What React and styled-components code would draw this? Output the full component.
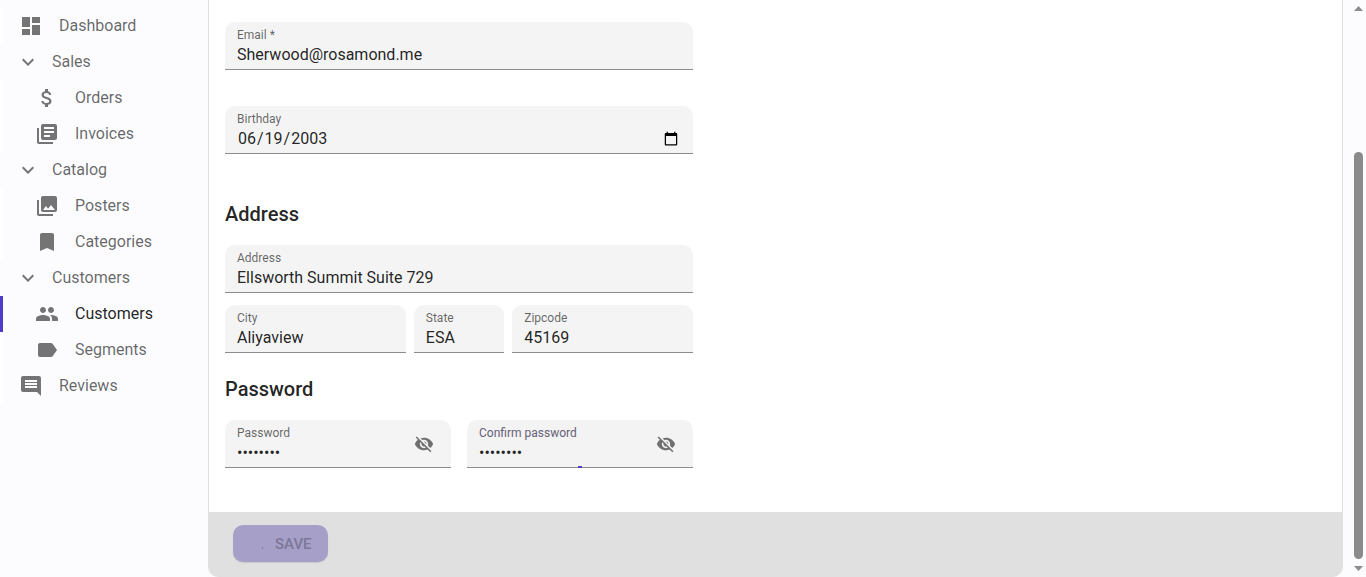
import React from "react";
import styled, { createGlobalStyle, css } from "styled-components";
import {
  MdDashboard,
  MdExpandMore,
  MdAttachMoney,
  MdLibraryBooks,
  MdCollections,
  MdBookmark,
  MdPeople,
  MdLabel,
  MdComment,
  MdVisibilityOff,
} from "react-icons/md";

const GlobalStyle = createGlobalStyle`
  *, *::before, *::after { box-sizing: border-box; }
  body {
    margin: 0;
    background: #fcfcfe;
    color: rgba(0, 0, 0, 0.87);
    font-family: Roboto, "Liberation Sans", sans-serif;
    font-size: 16px;
    line-height: 24px;
  }
`;

const Page = styled.div`
  display: flex;
  align-items: flex-start;
`;

const Sidebar = styled.nav`
  flex: 0 0 208px;
  padding-top: 8px;
`;

const MenuList = styled.ul`
  margin: 0;
  padding: 0;
  list-style: none;
`;

const row = css`
  display: flex;
  align-items: center;
  width: 100%;
  height: 36px;
  color: rgba(0, 0, 0, 0.6);
  font: inherit;
  text-align: left;
  text-decoration: none;

  svg {
    flex: none;
    width: 24px;
    height: 24px;
    color: rgba(0, 0, 0, 0.54);
  }
`;

const MenuLink = styled.a`
  ${row}
  gap: 16px;
  padding-left: ${(p) => (p.$nested ? 32 : 16)}px;
  border-left: 3px solid ${(p) => (p.$active ? "#4f3cc9" : "#fff")};
  ${(p) => p.$active && "color: rgba(0, 0, 0, 0.87);"}
`;

const GroupButton = styled.button`
  ${row}
  gap: 12px;
  padding: 0 16px;
  border: 0;
  background: none;
`;

const Card = styled.main`
  flex: 1;
  min-width: 0;
  margin-right: 8px;
  border: 1px solid #e0e0e3;
  border-top: 0;
  border-bottom: 0;
  border-radius: 0 0 10px 10px;
  background: #fff;
  overflow: hidden;
`;

const FormBody = styled.div`
  width: 100%;
  max-width: 500px;
  padding: 22px 16px 44px;
`;

const SectionTitle = styled.h2`
  margin: 0 0 15px;
  font-size: 20px;
  font-weight: 500;
  line-height: 32px;
`;

const FieldRow = styled.div`
  display: grid;
  grid-template-columns: ${(p) => p.$columns || "1fr"};
  gap: ${(p) => p.$gap || 8}px;
  margin-bottom: ${(p) => p.$space || 0}px;
`;

const FieldBox = styled.div`
  display: flex;
  align-items: center;
  min-width: 0;
  height: 48px;
  padding: 0 12px;
  border-bottom: 1px solid #8c8c8c;
  border-radius: 10px 10px 0 0;
  background: ${(p) => (p.$focused ? "#f3f3f3" : "#f4f4f4")};
  position: relative;

  ${(p) =>
    p.$focused &&
    css`
      &::after {
        content: "";
        position: absolute;
        bottom: -1px;
        left: calc(50% - 2px);
        width: 4px;
        height: 2px;
        background: #4f3cc9;
      }
    `}
`;

const FieldText = styled.div`
  display: flex;
  flex: 1;
  flex-direction: column;
  min-width: 0;
  padding-top: 2px;
`;

const Label = styled.label`
  color: ${(p) => (p.$focused ? "#666179" : "rgba(0, 0, 0, 0.6)")};
  font-size: 12px;
  line-height: 16px;
`;

const Input = styled.input`
  width: 100%;
  height: 23px;
  margin: 0;
  padding: 0;
  border: 0;
  outline: 0;
  background: none;
  color: rgba(0, 0, 0, 0.87);
  font: inherit;
`;

const IconButton = styled.button`
  display: flex;
  align-items: center;
  justify-content: center;
  width: 30px;
  height: 30px;
  padding: 0;
  border: 0;
  background: none;
  color: rgba(0, 0, 0, 0.54);

  svg {
    width: 20px;
    height: 20px;
  }
`;

const Toolbar = styled.div`
  display: flex;
  align-items: flex-start;
  margin: 0 -1px;
  padding: 13px 25px 15px;
  background: #e0e0e0;
`;

const SaveButton = styled.button`
  display: flex;
  align-items: center;
  gap: 8px;
  height: 37px;
  padding: 0 16px;
  border: 0;
  border-radius: 10px;
  background: #a6a0c9;
  color: #7c7797;
  font: inherit;
  font-size: 15px;
  font-weight: 500;
  text-transform: uppercase;
  box-shadow: 0 1px 1px rgba(0, 0, 0, 0.1);
`;

const Spinner = styled.svg`
  width: 18px;
  height: 18px;
`;

const ScrollTrack = styled.div`
  display: flex;
  flex: 0 0 15px;
  flex-direction: column;
  align-items: center;
  height: 100vh;
  padding: 6px 0;
`;

const ScrollArrow = styled.svg`
  flex: none;
  width: 9px;
  height: 5px;
  fill: #8b8b8b;
`;

const ScrollThumb = styled.div`
  flex: 1;
  width: 9px;
  margin: 141px 0 7px;
  border-radius: 5px;
  background: #8b8b8b;
`;

function NavItem({ icon: Icon, label, nested, active }) {
  return (
    <li>
      <MenuLink
        href="#"
        $nested={nested}
        $active={active}
        aria-current={active ? "page" : undefined}
      >
        <Icon />
        {label}
      </MenuLink>
    </li>
  );
}

function NavGroup({ label, children }) {
  return (
    <li>
      <GroupButton type="button" aria-expanded="true">
        <MdExpandMore />
        {label}
      </GroupButton>
      <MenuList>{children}</MenuList>
    </li>
  );
}

function Field({ id, label, type = "text", value, focused }) {
  return (
    <FieldBox $focused={focused}>
      <FieldText>
        <Label htmlFor={id} $focused={focused}>
          {label}
        </Label>
        <Input id={id} type={type} defaultValue={value} />
      </FieldText>
      {type === "password" && (
        <IconButton type="button" aria-label="Toggle password visibility">
          <MdVisibilityOff />
        </IconButton>
      )}
    </FieldBox>
  );
}

export default function App() {
  return (
    <>
      <GlobalStyle />
      <Page>
        <Sidebar>
          <MenuList>
            <NavItem icon={MdDashboard} label="Dashboard" />
            <NavGroup label="Sales">
              <NavItem nested icon={MdAttachMoney} label="Orders" />
              <NavItem nested icon={MdLibraryBooks} label="Invoices" />
            </NavGroup>
            <NavGroup label="Catalog">
              <NavItem nested icon={MdCollections} label="Posters" />
              <NavItem nested icon={MdBookmark} label="Categories" />
            </NavGroup>
            <NavGroup label="Customers">
              <NavItem nested active icon={MdPeople} label="Customers" />
              <NavItem nested icon={MdLabel} label="Segments" />
            </NavGroup>
            <NavItem icon={MdComment} label="Reviews" />
          </MenuList>
        </Sidebar>
        <Card>
          <form onSubmit={(e) => e.preventDefault()}>
            <FormBody>
              <FieldRow $space={36}>
                <Field id="email" label="Email *" value="Sherwood@rosamond.me" />
              </FieldRow>
              <FieldRow $space={44}>
                <Field id="birthday" label="Birthday" type="date" value="2003-06-19" />
              </FieldRow>
              <SectionTitle>Address</SectionTitle>
              <FieldRow $space={12}>
                <Field id="address" label="Address" value="Ellsworth Summit Suite 729" />
              </FieldRow>
              <FieldRow $columns="2fr 1fr 2fr" $space={20}>
                <Field id="city" label="City" value="Aliyaview" />
                <Field id="state" label="State" value="ESA" />
                <Field id="zipcode" label="Zipcode" value="45169" />
              </FieldRow>
              <SectionTitle>Password</SectionTitle>
              <FieldRow $columns="1fr 1fr" $gap={16}>
                <Field id="password" label="Password" type="password" value="password" />
                <Field
                  id="confirm"
                  label="Confirm password"
                  type="password"
                  value="password"
                  focused
                />
              </FieldRow>
            </FormBody>
            <Toolbar>
              <SaveButton type="submit" disabled>
                <Spinner viewBox="0 0 18 18" aria-hidden="true">
                  <path d="M13 14l1-2" stroke="#7c7797" strokeWidth="1" fill="none" />
                </Spinner>
                Save
              </SaveButton>
            </Toolbar>
          </form>
        </Card>
        <ScrollTrack aria-hidden="true">
          <ScrollArrow viewBox="0 0 18 10">
            <path d="M0 10L9 0L18 10z" />
          </ScrollArrow>
          <ScrollThumb />
          <ScrollArrow viewBox="0 0 18 10">
            <path d="M0 0L9 10L18 0z" />
          </ScrollArrow>
        </ScrollTrack>
      </Page>
    </>
  );
}
